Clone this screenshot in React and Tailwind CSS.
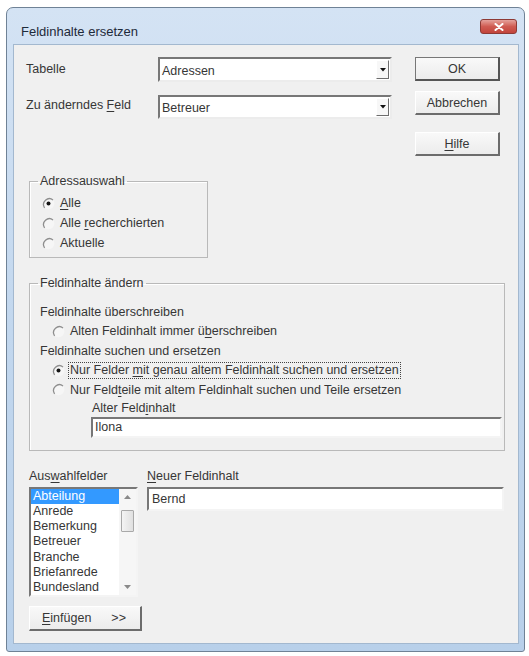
const listItems = ['Abteilung', 'Anrede', 'Bemerkung', 'Betreuer', 'Branche', 'Briefanrede', 'Bundesland']

function Radio({ checked }) {
  return (
    <svg width="13" height="13" viewBox="0 0 13 13" className="shrink-0">
      <circle cx="6.5" cy="6.5" r="5.8" fill="#f6f6f6" />
      <path d="M11 3 A5.8 5.8 0 0 0 2.6 10.8" stroke="#8e8e8e" strokeWidth="1.3" fill="none" />
      {checked && <circle cx="6.5" cy="6.5" r="2" fill="#151515" />}
    </svg>
  )
}

function U({ children }) {
  return <span className="underline decoration-1 underline-offset-2">{children}</span>
}

function Combo({ value }) {
  return (
    <div className="flex h-full w-[234px] items-stretch border-2 border-t-[#777] border-l-[#777] border-r-[#ececec] border-b-[#ececec] bg-white">
      <div className="flex flex-1 items-center pl-[2px] pt-[2px]">{value}</div>
      <div className="my-[1px] mr-[1px] flex w-[13px] items-center justify-center border border-t-white border-l-white border-r-[#6d6d6d] border-b-[#6d6d6d] bg-[#f7f7f7]">
        <svg width="6" height="4" viewBox="0 0 6 4">
          <path d="M0 0 H6 L3 3.5 Z" fill="#111" />
        </svg>
      </div>
    </div>
  )
}

function Button({ children, isDefault, className = '' }) {
  const edge = isDefault
    ? 'border border-[#777] border-r-2 border-b-2 border-r-[#555] border-b-[#555]'
    : 'border border-t-white border-l-white border-r-2 border-b-2 border-r-[#6c6c6c] border-b-[#6c6c6c]'
  return (
    <div className={`flex items-center justify-center bg-gradient-to-b from-[#f9f9f9] to-[#ececec] ${edge} ${className}`}>
      {children}
    </div>
  )
}

function Group({ title, className = '', children }) {
  return (
    <fieldset className={`border border-[#b9b9b9] shadow-[inset_1px_1px_0_#fff] ${className}`}>
      <legend className="ml-[8px] px-[2px] leading-[16px]">{title}</legend>
      {children}
    </fieldset>
  )
}

export default function App() {
  return (
    <div className="min-h-screen bg-white pl-[6px] pt-[7px] font-['Liberation_Sans',Arial,sans-serif] text-[12.5px] leading-[16px] text-[#363636]">
      <div className="flex h-[645px] w-[519px] flex-col rounded-t-[7px] rounded-b-[3px] border border-[#6f8296] bg-gradient-to-b from-[#d4e3f4] via-[#c2d7ee] to-[#b8d0ea]">
        {/* title bar */}
        <div className="flex h-[37px] items-start justify-between pl-[14px] pr-[7px]">
          <div className="pt-[16px] text-[13px] text-[#1e2a3a]">Feldinhalte ersetzen</div>
          <div className="mt-[11px] flex h-[15px] w-[37px] items-center justify-center rounded-[3px] border border-[#8d3a35] bg-gradient-to-b from-[#e4a29c] via-[#cf5b52] to-[#c2443b]">
            <svg width="10" height="8" viewBox="0 0 10 8">
              <path d="M1.5 1 L8.5 7 M8.5 1 L1.5 7" stroke="#fff" strokeWidth="2" strokeLinecap="round" />
            </svg>
          </div>
        </div>

        {/* client area */}
        <div className="ml-[7px] mr-[6px] h-[598px] bg-[#f0f0f0] shadow-[0_0_0_1px_#a3b8cf]">
          {/* top rows */}
          <div className="flex pl-[12px] pt-[12px]">
            <div className="flex flex-col gap-[13px]">
              <div className="flex h-[25px] items-center">
                <div className="w-[132px] pb-[2px]">Tabelle</div>
                <Combo value="Adressen" />
              </div>
              <div className="flex h-[24px] items-center">
                <div className="w-[132px] pb-[5px]">
                  Zu änderndes <U>F</U>eld
                </div>
                <Combo value="Betreuer" />
              </div>
            </div>
            <div className="ml-[23px] flex flex-col">
              <Button isDefault className="h-[24px] w-[85px]">OK</Button>
              <Button className="mt-[10px] h-[24px] w-[85px]">Abbrechen</Button>
              <Button className="mt-[17px] h-[24px] w-[85px]">
                <span>
                  <U>H</U>ilfe
                </span>
              </Button>
            </div>
          </div>

          {/* Adressauswahl */}
          <Group title="Adressauswahl" className="ml-[15px] mt-[17px] w-[179px] pb-[4px] pt-[4px]">
            {[
              [true, <><U>A</U>lle</>],
              [false, <>Alle <U>r</U>echerchierten</>],
              [false, <>Aktuelle</>],
            ].map(([checked, label], i) => (
              <div key={i} className="flex h-[20px] items-center gap-[5px] pl-[12px]">
                <Radio checked={checked} />
                <span>{label}</span>
              </div>
            ))}
          </Group>

          {/* Feldinhalte ändern */}
          <Group title="Feldinhalte ändern" className="ml-[15px] mt-[17px] w-[476px] pb-[12px] pt-[11px]">
            <div className="flex h-[19.5px] items-center pl-[10px]">Feldinhalte überschreiben</div>
            <div className="flex h-[19.5px] items-center gap-[5px] pl-[22px]">
              <Radio />
              <span>
                Alten Feldinhalt immer ü<U>b</U>erschreiben
              </span>
            </div>
            <div className="flex h-[19.5px] items-center pl-[10px]">Feldinhalte suchen und ersetzen</div>
            <div className="flex h-[19.5px] items-center gap-[3px] pl-[22px]">
              <Radio checked />
              <span className="border border-dotted border-[#444] px-[1px] leading-[15px]">
                Nur Felder <U>m</U>it genau altem Feldinhalt suchen und ersetzen
              </span>
            </div>
            <div className="flex h-[19.5px] items-center gap-[5px] pl-[22px]">
              <Radio />
              <span>
                Nur Feld<U>t</U>eile mit altem Feldinhalt suchen und Teile ersetzen
              </span>
            </div>
            <div className="flex h-[17px] items-center pl-[62px]">
              Alter Feld<U>i</U>nhalt
            </div>
            <div className="ml-[61px] mr-[2px] flex h-[21px] items-center border-2 border-t-[#777] border-l-[#777] border-r-[#f4f4f4] border-b-[#f4f4f4] bg-white pl-[2px]">
              Ilona
            </div>
          </Group>

          {/* bottom */}
          <div className="ml-[15px] mt-[17px] flex gap-[5px]">
            <div className="flex w-[113px] flex-col">
              <div className="h-[16px]">
                Aus<U>w</U>ahlfelder
              </div>
              <div className="mt-[3px] flex h-[110px] w-[109px] border-2 border-t-[#777] border-l-[#777] border-r-[#f4f4f4] border-b-[#f4f4f4] bg-white">
                <div className="flex-1 leading-[15.3px]">
                  {listItems.map((item, i) => (
                    <div
                      key={item}
                      className={`pl-[2px] ${i === 0 ? 'bg-[#3399ff] text-white' : ''}`}
                    >
                      {item}
                    </div>
                  ))}
                </div>
                <div className="flex w-[17px] flex-col bg-[#f6f6f6]">
                  <div className="flex h-[16px] items-center justify-center">
                    <svg width="7" height="4" viewBox="0 0 7 4">
                      <path d="M0 4 L3.5 0 L7 4 Z" fill="#8a8a8a" />
                    </svg>
                  </div>
                  <div className="mx-[2px] mt-[5px] h-[22px] rounded-[1px] border border-[#a9a9a9] bg-gradient-to-r from-[#f4f4f4] to-[#e0e0e0]" />
                  <div className="flex-1" />
                  <div className="flex h-[16px] items-center justify-center">
                    <svg width="7" height="4" viewBox="0 0 7 4">
                      <path d="M0 0 L3.5 4 L7 0 Z" fill="#8a8a8a" />
                    </svg>
                  </div>
                </div>
              </div>
              <Button className="mt-[9px] h-[25px] w-[113px] justify-start gap-[20px] pl-[12px]">
                <span>
                  <U>E</U>infügen
                </span>
                <span>&gt;&gt;</span>
              </Button>
            </div>
            <div className="flex flex-col">
              <div className="h-[16px]">
                <U>N</U>euer Feldinhalt
              </div>
              <div className="mt-[3px] flex h-[24px] w-[357px] items-center border-2 border-t-[#777] border-l-[#777] border-r-[#f4f4f4] border-b-[#f4f4f4] bg-white pl-[3px]">
                Bernd
              </div>
            </div>
          </div>
        </div>
      </div>
    </div>
  )
}
